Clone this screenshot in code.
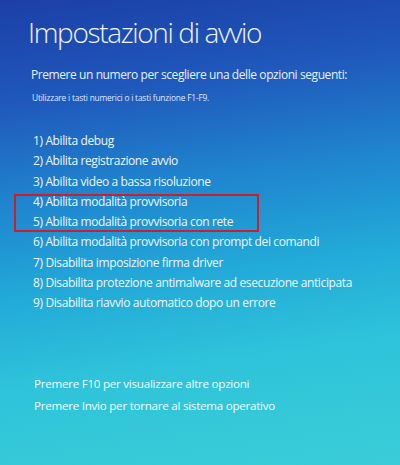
export default function App() {
  const items = [
    "1) Abilita debug",
    "2) Abilita registrazione avvio",
    "3) Abilita video a bassa risoluzione",
    "4) Abilita modalità provvisoria",
    "5) Abilita modalità provvisoria con rete",
    "6) Abilita modalità provvisoria con prompt dei comandi",
    "7) Disabilita imposizione firma driver",
    "8) Disabilita protezione antimalware ad esecuzione anticipata",
    "9) Disabilita riavvio automatico dopo un errore",
  ];
  return (
    <div
      className="w-[400px] h-[465px] overflow-hidden text-white bg-[linear-gradient(172deg,#1c3fa6_0%,#1f58bb_20%,#1f86cf_40%,#22aad8_58%,#2ec3da_75%,#3acdd8_100%)]"
      style={{ fontFamily: '"Open Sans", "Noto Sans", sans-serif' }}
    >
      <div className="pl-[28px] pt-[12px]">
        <h1 className="text-[28px] font-light leading-[40px] tracking-[-1.35px] text-[#eef3ff]">
          Impostazioni di avvio
        </h1>
        <p className="mt-[14px] pl-[3px] text-[12px] leading-[18px] tracking-[-0.42px] text-[#e8f0ff]">
          Premere un numero per scegliere una delle opzioni seguenti:
        </p>
        <p className="mt-[8px] pl-[4px] text-[8.4px] leading-[12px] tracking-[-0.2px] text-[#dfe9ff]">
          Utilizzare i tasti numerici o i tasti funzione F1-F9.
        </p>
        <div className="mt-[27px] pl-[5px] text-[12px] leading-[20.3px] tracking-[-0.38px] text-[#eef6ff]">
          {items.slice(0, 3).map((t) => (
            <div key={t}>{t}</div>
          ))}
          <div className="relative">
            <div className="absolute left-[-19px] top-[2px] bottom-0 w-[245px] border-[2.5px] border-[#cc1f2a]" />
            <div>{items[3]}</div>
            <div>{items[4]}</div>
          </div>
          {items.slice(5).map((t) => (
            <div key={t}>{t}</div>
          ))}
        </div>
        <div className="mt-[59px] pl-[6px] text-[11.6px] leading-[22px] tracking-[-0.25px] text-[#eefcff]">
          <div>Premere F10 per visualizzare altre opzioni</div>
          <div>Premere Invio per tornare al sistema operativo</div>
        </div>
      </div>
    </div>
  );
}
